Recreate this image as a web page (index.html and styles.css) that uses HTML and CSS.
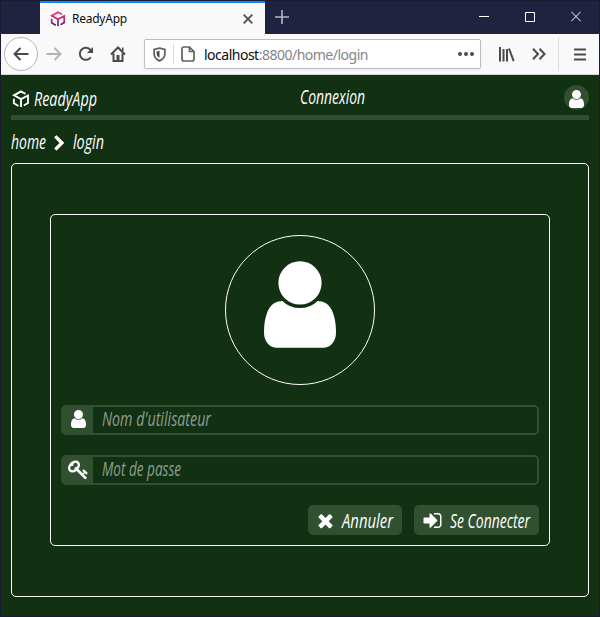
FILE: index.html
```html
<!DOCTYPE html>
<html lang="fr">
<head>
<meta charset="utf-8">
<title>ReadyApp</title>
<link rel="stylesheet" href="styles.css">
</head>
<body>
<svg class="defs" width="0" height="0">
  <defs>
    <linearGradient id="brand" gradientUnits="userSpaceOnUse" x1="0" y1="0" x2="0" y2="18"><stop offset="0.25" stop-color="#f0286c"/><stop offset="1" stop-color="#302870"/></linearGradient>
    <symbol id="cube" viewBox="0 0 18 18"><path fill="none" stroke-width="1.900" d="M13.500 3.800 9 1.400 2 5.300l7 3.900 7-3.700V13l-4.200 2.500M9 9v8M1.900 8.700v4.600l4.600 2.700"/></symbol>
    <symbol id="user" viewBox="0 128 1280 1536"><path d="M1280 1399q0 109-62.500 187t-150.500 78h-854q-88 0-150.500-78t-62.500-187q0-85 8.500-160.500t31.500-152 58.500-131 94-89 134.500-34.500q131 128 313 128t313-128q76 0 134.500 34.500t94 89 58.500 131 31.500 152 8.500 160.500zm-256-887q0 159-112.500 271.500t-271.500 112.500-271.500-112.500-112.500-271.500 112.500-271.500 271.500-112.500 271.500 112.500 112.500 271.500z"/></symbol>
  </defs>
</svg>
<div class="window">
  <div class="titlebar">
    <div class="tab">
      <svg class="favicon" width="16" height="16"><use href="#cube" stroke="url(#brand)"/></svg>
      <span class="tab-title">ReadyApp</span>
      <svg class="tab-close" width="10" height="10"><path d="M.7.7l8.600 8.600M9.300.7.7 9.300"/></svg>
    </div>
    <svg class="newtab" width="14" height="14"><path d="M7 0v14M0 7h14"/></svg>
    <div class="controls">
      <svg width="10" height="11"><path d="M0 5.500h10"/></svg>
      <svg width="10" height="11"><path d="M.5 1.500h9v9h-9z"/></svg>
      <svg width="10" height="11"><path d="M.2.7l9.600 9.600M9.800.7.2 10.300"/></svg>
    </div>
  </div>
  <div class="toolbar">
    <div class="back"><svg width="16" height="14"><path d="M15.500 7H1.500M7.500 1l-6 6 6 6"/></svg></div>
    <svg class="forward" width="16" height="14"><path d="M.5 7h14M8.500 1l6 6-6 6"/></svg>
    <svg class="reload" width="16" height="16"><path d="M12.800 11.200A6 6 0 1 1 12.500 4"/><path class="solid" d="M15 1v6H9z"/></svg>
    <svg class="house" width="16" height="16"><path d="M1 8.500 8 1.500l7 7M3.500 7.500V15h9V7.500"/><path class="solid" d="M12 1.500h1.500V5H12zM6.500 9h3v6h-3z"/></svg>
    <div class="urlbar">
      <svg class="shield" width="13" height="15" viewBox="0 0 12 14"><path d="M6 1 11 2.300v4.200q0 4-5 6.500-5-2.500-5-6.500V2.300z"/><path class="solid" d="M6 3.500v6.800Q3.300 9 3.300 6.500V4.200z"/></svg>
      <span class="divider"></span>
      <svg class="file" width="14" height="16"><path d="M3 1h5.500L13 5.500V13q0 2-2 2H3q-2 0-2-2V3q0-2 2-2zM8.500 1v4.500H13"/></svg>
      <span class="address">localhost<span class="rest">:8800/home/login</span></span>
      <svg class="more" width="16" height="4"><path class="solid" d="M0 2a2 2 0 1 1 4 0 2 2 0 0 1-4 0M6 2a2 2 0 1 1 4 0 2 2 0 0 1-4 0M12 2a2 2 0 1 1 4 0 2 2 0 0 1-4 0"/></svg>
    </div>
    <svg class="library" width="16" height="15"><path d="M1 0v14.500M4.500 2v12.500M8 2v12.500M10 1.500l4.700 12.700"/></svg>
    <svg class="overflow" width="14" height="12"><path d="M1 .8 6 6l-5 5.200M7.500.8 12.500 6l-5 5.200"/></svg>
    <span class="tool-divider"></span>
    <svg class="burger" width="12" height="13"><path d="M0 1.500h12M0 6.500h12M0 11.500h12"/></svg>
  </div>
  <main class="page">
    <header class="header">
      <a class="brand">
        <svg class="logo" width="18" height="18"><use href="#cube" stroke="#fff"/></svg>
        <svg class="script" width="66" height="28"><text x="0" y="20" textLength="63" lengthAdjust="spacingAndGlyphs">ReadyApp</text></svg>
      </a>
      <svg class="script page-title" width="68" height="28"><text x="0" y="20" textLength="65" lengthAdjust="spacingAndGlyphs">Connexion</text></svg>
      <div class="avatar"><svg width="15" height="18"><use href="#user"/></svg></div>
    </header>
    <nav class="crumbs">
      <svg class="script" width="36" height="28"><text x="0" y="20" textLength="35" lengthAdjust="spacingAndGlyphs">home</text></svg>
      <svg class="chevron" width="17" height="17" viewBox="0 0 1792 1792"><path d="M1363 877l-742 742q-19 19-45 19t-45-19l-166-166q-19-19-19-45t19-45l531-531-531-531q-19-19-19-45t19-45l166-166q19-19 45-19t45 19l742 742q19 19 19 45t-19 45z"/></svg>
      <svg class="script" width="36" height="28"><text x="0" y="20" textLength="31" lengthAdjust="spacingAndGlyphs">login</text></svg>
    </nav>
    <section class="panel">
      <form class="login">
        <div class="portrait"><svg width="72" height="87"><use href="#user"/></svg></div>
        <label class="field">
          <span class="addon"><svg width="15" height="18"><use href="#user"/></svg></span>
          <svg class="script hint" width="120" height="26"><text x="1" y="19" textLength="109" lengthAdjust="spacingAndGlyphs">Nom d'utilisateur</text></svg>
        </label>
        <label class="field">
          <span class="addon"><svg width="21" height="21" viewBox="0 0 1792 1792"><path d="M832 512q0-80-56-136t-136-56-136 56-56 136q0 42 19 83-41-19-83-19-80 0-136 56t-56 136 56 136 136 56 136-56 56-136q0-42-19-83 41 19 83 19 80 0 136-56t56-136zm851 704q0 17-49 66t-66 49q-9 0-28.500-16t-36.500-33-38.500-40-24.500-26l-96 96 220 220q28 28 28 68 0 42-39 81t-81 39q-40 0-68-28l-671-671q-176 131-365 131-163 0-265.500-102.500t-102.500-265.500q0-160 95-313t248-248 313-95q163 0 265.500 102.500t102.500 265.500q0 189-131 365l355 355 96-96q-3-3-26-24.500t-40-38.500-33-36.500-16-28.500q0-17 49-66t66-49q13 0 23 10 6 6 46 44.500t82 79.500 86.500 86 73 78 28.500 41z"/></svg></span>
          <svg class="script hint" width="120" height="26"><text x="1" y="19" textLength="79" lengthAdjust="spacingAndGlyphs">Mot de passe</text></svg>
        </label>
        <div class="actions">
          <button type="button" class="button cancel">
            <svg width="21" height="21" viewBox="0 0 1792 1792"><path d="M1490 1322q0 40-28 68l-136 136q-28 28-68 28t-68-28l-294-294-294 294q-28 28-68 28t-68-28l-136-136q-28-28-28-68t28-68l294-294-294-294q-28-28-28-68t28-68l136-136q28-28 68-28t68 28l294 294 294-294q28-28 68-28t68 28l136 136q28 28 28 68t-28 68l-294 294 294 294q28 28 28 68z"/></svg>
            <svg class="script" width="56" height="30"><text x="1" y="23" textLength="51" lengthAdjust="spacingAndGlyphs">Annuler</text></svg>
          </button>
          <button type="button" class="button submit">
            <svg width="21" height="21" viewBox="0 0 1792 1792"><path d="M1312 896q0 26-19 45l-544 544q-19 19-45 19t-45-19-19-45v-288h-448q-26 0-45-19t-19-45v-384q0-26 19-45t45-19h448v-288q0-26 19-45t45-19 45 19l544 544q19 19 19 45zm352-352v704q0 119-84.500 203.500t-203.500 84.500h-320q-13 0-22.500-9.500t-9.500-22.500q0-4-1-20t-.5-26.500 3-23.500 10-19.500 20.500-6.500h320q66 0 113-47t47-113v-704q0-66-47-113t-113-47h-312l-11.500-1-11.500-3-8-5.500-7-9-2-13.500q0-4-1-20t-.5-26.500 3-23.500 10-19.500 20.500-6.500h320q119 0 203.500 84.500t84.500 203.500z"/></svg>
            <svg class="script" width="84" height="30"><text x="0" y="23" textLength="80" lengthAdjust="spacingAndGlyphs">Se Connecter</text></svg>
          </button>
        </div>
      </form>
    </section>
  </main>
</div>
</body>
</html>
```
FILE: styles.css
```css
* { box-sizing: border-box; }
body { margin: 0; background: #1c1c30; font-family: "Open Sans", sans-serif; overflow: hidden; }
svg { display: block; flex: none; }
.defs { position: absolute; }
.window { width: 600px; height: 617px; padding: 1px; display: flex; flex-direction: column; }

.titlebar { height: 33px; flex: none; display: flex; background: #202340; }
.tab { width: 225px; margin-left: 39px; padding: 0 12px 0 10px; display: flex; align-items: center; background: #f9f9fa; border-top: 2px solid #0a84ff; }
.tab-title { margin-left: 6px; flex: 1; font: 12px "Noto Sans", sans-serif; letter-spacing: -.25px; color: #0c0c0d; }
.tab-close { fill: none; stroke: #4a4a4f; stroke-width: 1.7; }
.newtab { margin: 9px 0 0 10px; stroke: #b5b5c2; stroke-width: 1.6; }
.controls { margin: 10px 18px 0 auto; display: flex; gap: 36px; fill: none; stroke: #fff; stroke-width: 1; }

.toolbar { height: 41px; flex: none; padding-left: 3px; display: flex; align-items: center; background: #f9f9fa; border-bottom: 1px solid #d8d8d8; fill: none; stroke: #4a4a4f; stroke-width: 2; }
.toolbar .solid { fill: #4a4a4f; stroke: none; }
.back { width: 34px; height: 34px; display: grid; place-items: center; background: #fff; border: 1px solid #b5b5b5; border-radius: 50%; }
.forward { margin-left: 8px; stroke: #b4b4b6; }
.reload { margin-left: 16px; }
.house { margin-left: 16px; }
.urlbar { width: 337px; height: 30px; margin-left: 18px; padding: 0 6px 0 8px; display: flex; align-items: center; background: #fff; border: 1px solid #bebebf; border-radius: 2px; box-shadow: 0 1px 3px #0001; stroke: #626266; stroke-width: 1.7; }
.divider { width: 1px; height: 22px; margin: 0 7px; background: #dcdcdd; }
.address { margin-left: 9px; flex: 1; white-space: nowrap; font: 14px "Noto Sans", sans-serif; letter-spacing: -.5px; color: #0c0c0d; }
.rest { color: #858589; }
.library { margin-left: 18px; }
.overflow { margin-left: 17px; }
.tool-divider { width: 1px; height: 34px; margin: 0 15px 0 12px; background: #dcdcdd; }

.page { flex: 1; padding: 8px 10px 19px; background: #123012; fill: #fff; display: flex; flex-direction: column; }
.script { overflow: visible; font: italic 500 20.5px "Open Sans", sans-serif; }
.header { height: 37px; flex: none; display: grid; grid-template-columns: 1fr 1fr auto; border-bottom: 5px solid #305030; }
.brand { display: flex; padding-top: 3px; }
.logo { margin: 4px 4px 0 1px; }
.page-title { margin: 1px 0 0 12px; }
.avatar { width: 25px; height: 25px; margin-top: 2px; padding-top: 2px; display: grid; place-items: center; background: #305030; border-radius: 50%; }
.crumbs { height: 43px; flex: none; padding-top: 9px; display: flex; }
.chevron { margin: 6px 5px 0 4px; }
.panel { flex: 1; padding: 50px 38px; border: 1px solid #fff; border-radius: 5px; }
.login { height: 332px; padding: 20px 10px 10px; display: flex; flex-direction: column; gap: 20px; border: 1px solid #fff; border-radius: 5px; }
.portrait { width: 150px; height: 150px; align-self: center; display: grid; place-items: center; padding-bottom: 11px; border: 1px solid #fff; border-radius: 50%; }
.field { height: 30px; display: flex; border: 2px solid #305030; border-radius: 5px; }
.addon { width: 30px; display: grid; place-items: center; background: #305030; }
.addon svg { margin: 0 0 2px 0; }
.hint { margin-left: 8px; fill: #8f9f8f; }
.actions { display: flex; justify-content: flex-end; gap: 12px; }
.button { height: 30px; padding: 0 0 0 7px; display: flex; align-items: center; gap: 5px; border: 0; border-radius: 5px; background: #305030; fill: #fff; }
.cancel { width: 94px; }
.submit { width: 125px; padding-left: 8px; gap: 7px; }
```
